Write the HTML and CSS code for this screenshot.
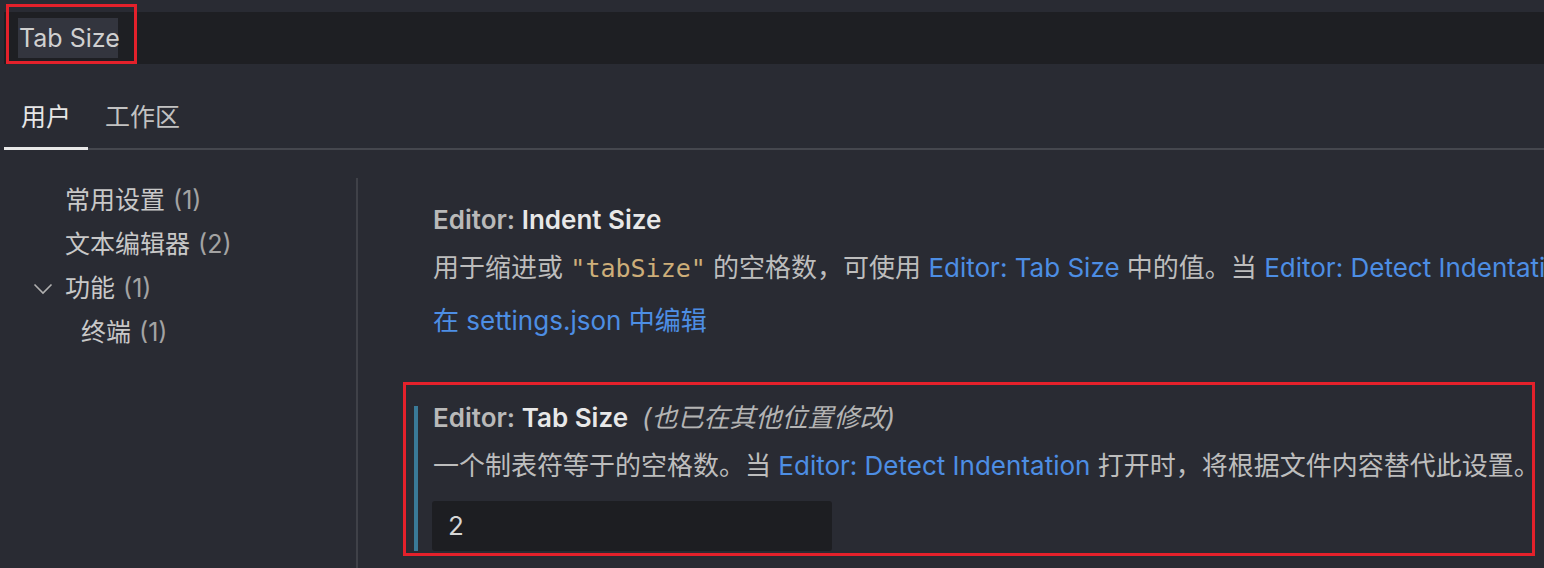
FILE: index.html
```html
<!DOCTYPE html>
<html lang="zh-CN">
<head>
<meta charset="utf-8">
<title>Settings</title>
<link rel="stylesheet" href="styles.css">
</head>
<body>
<div class="page">
  <div class="search">
    <span class="query">Tab Size</span>
    <div class="annot annot-search"></div>
  </div>

  <div class="tabs">
    <div class="tab active">用户</div>
    <div class="tab">工作区</div>
  </div>

  <div class="main">
    <nav class="toc">
      <div class="toc-item">常用设置 <span class="count">(1)</span></div>
      <div class="toc-item">文本编辑器 <span class="count">(2)</span></div>
      <div class="toc-item toc-group">
        <svg class="chev" width="20" height="12" viewBox="0 0 20 12"><polyline points="1.5,1.5 10,10 18.5,1.5" fill="none" stroke="#b0b0b0" stroke-width="1.6"/></svg>
        功能 <span class="count">(1)</span>
      </div>
      <div class="toc-item toc-sub">终端 <span class="count">(1)</span></div>
    </nav>

    <div class="divider"></div>

    <div class="content">
      <div class="setting">
        <div class="title"><span class="cat">Editor: </span><span class="name">Indent Size</span></div>
        <div class="desc">用于缩进或 <code class="code">"tabSize"</code> 的空格数，可使用 <span class="link">Editor: Tab Size</span> 中的值。当 <span class="link">Editor: Detect Indentation</span> 打开时，将根据文件内容替代此设置。</div>
        <div class="edit-link">在 settings.json 中编辑</div>
      </div>

      <div class="annot-box">
        <div class="setting modified">
          <div class="title"><span class="cat">Editor: </span><span class="name">Tab Size</span><span class="note">(也已在其他位置修改)</span></div>
          <div class="desc">一个制表符等于的空格数。当 <span class="link">Editor: Detect Indentation</span> 打开时，将根据文件内容替代此设置。</div>
          <div class="input">2</div>
        </div>
      </div>
    </div>
  </div>
</div>
</body>
</html>
```

FILE: styles.css
```css
html, body {
  margin: 0;
  padding: 0;
}
body {
  background: #292b33;
  width: 1544px;
  height: 568px;
  overflow: hidden;
  font-family: Inter, "Noto Sans CJK SC", sans-serif;
  font-size: 26px;
  color: #c4c4c4;
}
.page {
  padding-top: 12px;
}

/* search */
.search {
  position: relative;
  margin-left: 4px;
  height: 52px;
  background: #1e1f23;
  display: flex;
  align-items: center;
}
.query {
  margin-left: 14px;
  height: 40px;
  line-height: 40px;
  padding: 0 1px;
  width: 100px;
  box-sizing: border-box;
  background: #33353e;
  color: #d0d0d0;
  font-size: 25px;
  white-space: nowrap;
}
.annot {
  position: absolute;
  border: 3px solid #e4212b;
  box-sizing: border-box;
  pointer-events: none;
}
.annot-search {
  left: 2px;
  top: -8px;
  width: 131px;
  height: 60px;
}

/* tabs */
.tabs {
  margin-left: 4px;
  height: 86px;
  box-sizing: border-box;
  border-bottom: 2px solid #45474e;
  display: flex;
  align-items: flex-end;
}
.tab {
  padding: 0 17px;
  height: 60px;
  line-height: 55px;
  box-sizing: border-box;
  border-bottom: 3px solid transparent;
  margin-bottom: -2px;
  color: #c2c2c2;
  font-size: 25px;
}
.tab.active {
  border-bottom-color: #e8e8e8;
  color: #e6e6e6;
}

/* main */
.main {
  display: flex;
  margin-top: 28px;
  height: 400px;
}
.toc {
  width: 356px;
  flex: none;
}
.toc-item {
  height: 44px;
  line-height: 44px;
  padding-left: 65px;
  color: #c8c8c8;
  font-size: 25px;
  white-space: nowrap;
  display: flex;
  align-items: center;
}
.toc-item .count {
  color: #a3a3a3;
  margin-left: 8px;
}
.toc-group {
  padding-left: 33px;
}
.toc-group .chev {
  margin-right: 12px;
  margin-top: 2px;
}
.toc-sub {
  padding-left: 81px;
}
.divider {
  width: 2px;
  flex: none;
  background: #3f4148;
}

.content {
  flex: 1;
  min-width: 0;
  white-space: nowrap;
  overflow: hidden;
}
.setting {
  padding-left: 75px;
  padding-top: 30px;
}
.title {
  line-height: 24px;
  height: 24px;
  font-weight: 600;
  color: #e8e8e8;
}
.title .cat {
  color: #b9b9b9;
}
.title .note {
  font-weight: 400;
  font-style: italic;
  color: #b4b4b4;
  margin-left: 14px;
}
.desc {
  margin-top: 18px;
  line-height: 36px;
  height: 36px;
  color: #bdbdbd;
}
.code {
  font-family: "DejaVu Sans Mono", monospace;
  font-size: 25px;
  color: #cdae79;
}
.link {
  color: #4d8ee4;
}
.edit-link {
  margin-top: 17px;
  line-height: 36px;
  height: 36px;
  color: #4d8ee4;
}

.annot-box {
  margin-top: 43px;
  margin-left: 45px;
  width: 1132px;
  height: 174px;
  box-sizing: border-box;
  border: 3px solid #e4212b;
}
.setting.modified {
  margin-top: 21px;
  margin-left: 8px;
  padding-top: 0;
  padding-left: 15px;
  border-left: 4px solid #3a7a98;
  height: 145px;
  box-sizing: border-box;
}
.input {
  margin-top: 17px;
  margin-left: -1px;
  width: 400px;
  height: 50px;
  line-height: 50px;
  box-sizing: border-box;
  padding-left: 16px;
  background: #1d1e22;
  border-radius: 3px;
  color: #d6d6d6;
}
```
